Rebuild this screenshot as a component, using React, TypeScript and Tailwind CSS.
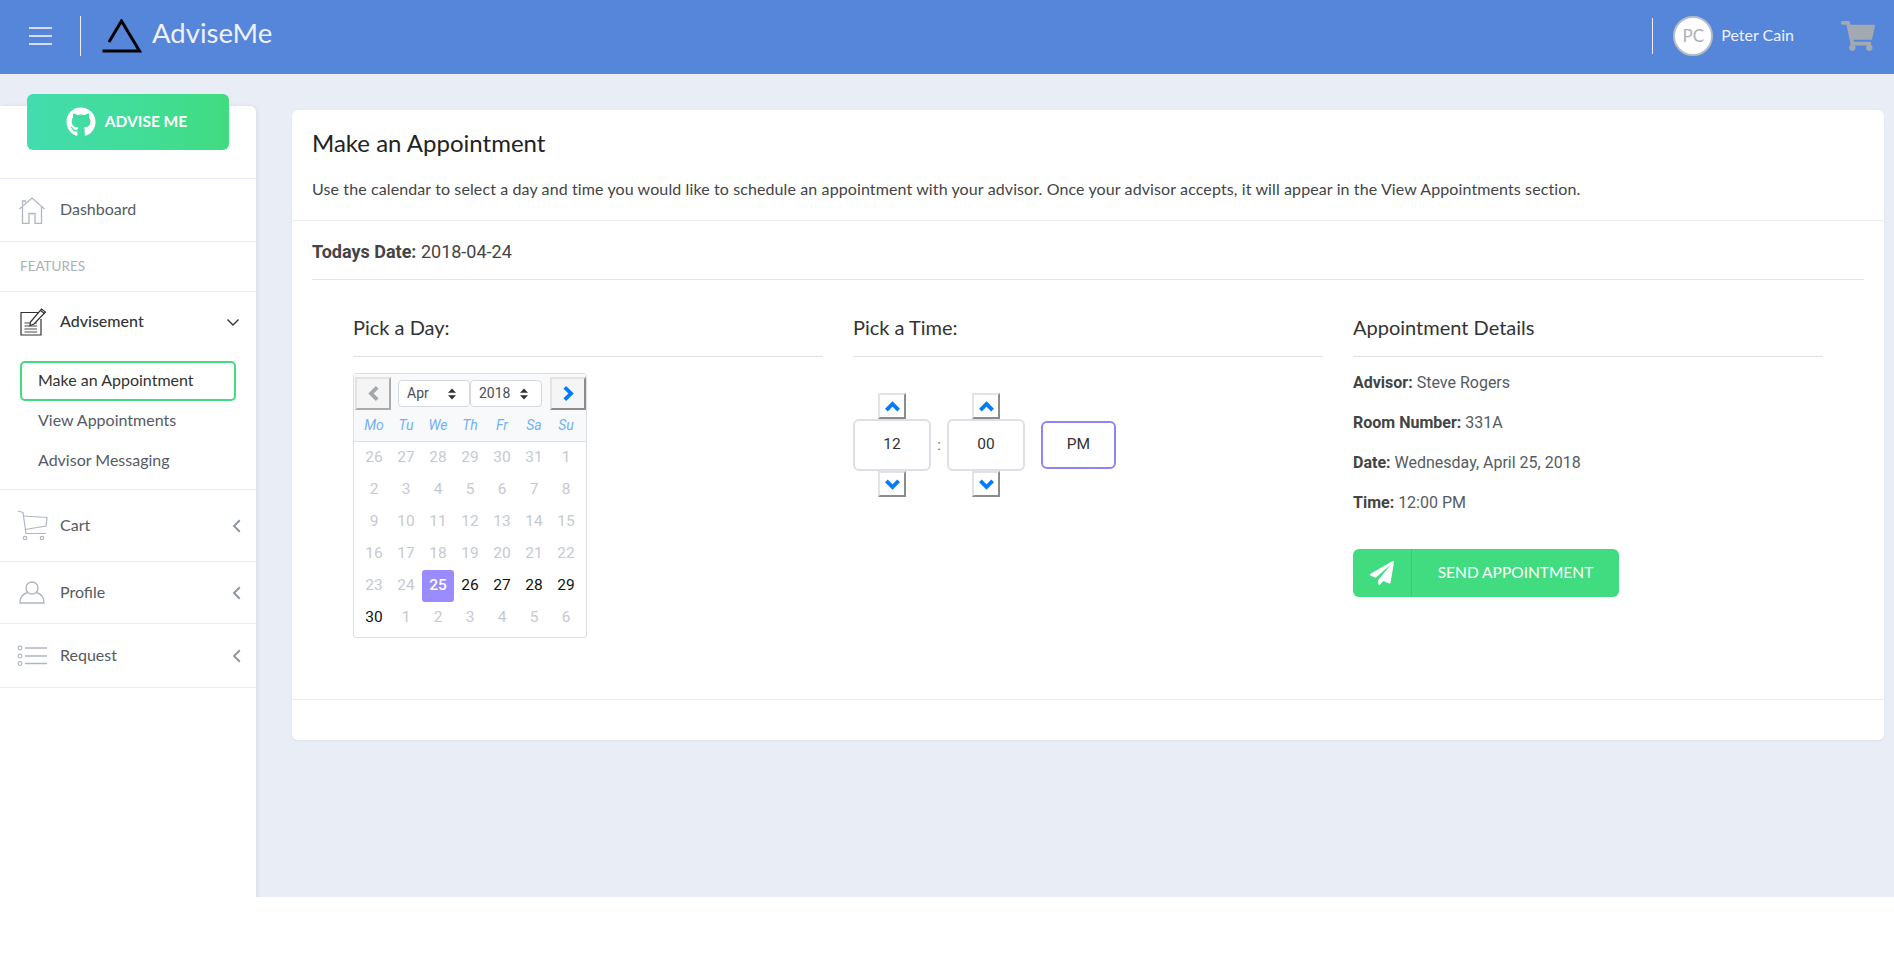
import React from "react";
import { FaGithub, FaShoppingCart, FaPaperPlane } from "react-icons/fa";

const exo = "font-['Lato','Noto_Sans',sans-serif]";
const roboto = "font-['Roboto',sans-serif]";

const HeavyChevron = ({ dir, color }: { dir: "left" | "right" | "up" | "down"; color: string }) => {
  const rot = { up: 0, right: 90, down: 180, left: 270 }[dir];
  return (
    <svg width="15" height="11" viewBox="0 0 15 11" fill="none" stroke={color} strokeWidth="3.8" style={{ transform: `rotate(${rot}deg)` }}>
      <path d="M1.4 9.2 L7.5 3 L13.6 9.2" />
    </svg>
  );
};

const Chevron = ({ dir }: { dir: "left" | "down" }) =>
  dir === "left" ? (
    <svg width="9" height="14" viewBox="0 0 9 14" fill="none" stroke="#8b949e" strokeWidth="1.9">
      <path d="M7.8 1.3 L2 7 L7.8 12.7" />
    </svg>
  ) : (
    <svg width="14" height="14" viewBox="0 0 14 14" fill="none" stroke="#333" strokeWidth="1.4">
      <path d="M1.5 4.5 L7 10 L12.5 4.5" />
    </svg>
  );

const HomeIcon = () => (
  <svg width="26" height="27" viewBox="0 0 26 27" fill="none" stroke="#b0b7c3" strokeWidth="1.3">
    <path d="M0.5 12 L13 1 L25.5 12" />
    <path d="M3.5 10 V26.3 H10 V16.5 H16 V26.3 H22.5 V10" />
    <path d="M3.5 8 V4 H6.5 V5.5" />
  </svg>
);
const NoteIcon = () => (
  <svg width="27" height="29" viewBox="0 0 27 29" fill="none" stroke="#333" strokeWidth="1.2">
    <path d="M18 5.5 H1 V28 H21 V12" />
    <path d="M4.5 16 H17 M4.5 19 H17 M4.5 22 H17 M4.5 25 H17" strokeWidth="0.9" />
    <path d="M10.5 15 L21.5 2 L25.5 5 L14 17 L10 18.5 Z" fill="#fff" />
    <path d="M20.5 3.5 L24.5 6.5" />
  </svg>
);
const CartIcon = () => (
  <svg width="31" height="31" viewBox="0 0 31 31" fill="none" stroke="#b0b7c3" strokeWidth="1.2">
    <path d="M1 1 L6 2.5 L9 23.5 H29" />
    <path d="M6.5 6 L30 7.5 L29 16 L8 19.5" />
    <circle cx="8" cy="28" r="1.7" />
    <circle cx="25" cy="28" r="1.7" />
  </svg>
);
const UserIcon = () => (
  <svg width="26" height="23" viewBox="0 0 26 23" fill="none" stroke="#b0b7c3" strokeWidth="1.4">
    <circle cx="13" cy="7" r="6" />
    <path d="M8.5 11.5 C3.5 13 1 17 1 22 H25 C25 17 22.5 13 17.5 11.5" />
  </svg>
);
const ListIcon = () => (
  <svg width="31" height="22" viewBox="0 0 31 22" fill="none" stroke="#b0b7c3">
    <circle cx="3" cy="3" r="1.9" strokeWidth="1.1" />
    <circle cx="3" cy="11" r="1.9" strokeWidth="1.1" />
    <circle cx="3" cy="18.5" r="1.9" strokeWidth="1.1" />
    <path d="M8 3 H30 M8 11 H30 M8 18.5 H30" strokeWidth="1.6" />
  </svg>
);

function NavRow({ icon, label, h }: { icon: React.ReactNode; label: string; h: string }) {
  return (
    <div className={`flex items-center border-b border-[#e9ecf2] ${h}`}>
      <div className="flex w-[60px] shrink-0 items-center justify-center pl-[4px]">{icon}</div>
      <span className="-mt-[2px] flex-1 text-[16px] text-[#555b62]">{label}</span>
      <span className="mr-[15px] flex"><Chevron dir="left" /></span>
    </div>
  );
}

const HEAD = ["Mo", "Tu", "We", "Th", "Fr", "Sa", "Su"];
const DAYS: [number, boolean][] = [
  [26, false], [27, false], [28, false], [29, false], [30, false], [31, false], [1, false],
  [2, false], [3, false], [4, false], [5, false], [6, false], [7, false], [8, false],
  [9, false], [10, false], [11, false], [12, false], [13, false], [14, false], [15, false],
  [16, false], [17, false], [18, false], [19, false], [20, false], [21, false], [22, false],
  [23, false], [24, false], [25, true], [26, true], [27, true], [28, true], [29, true],
  [30, true], [1, false], [2, false], [3, false], [4, false], [5, false], [6, false],
];

const UpDown = () => (
  <svg width="8" height="12" viewBox="0 0 8 12" fill="#333">
    <path d="M4 0.5 L8 4.8 H0 Z M4 11.5 L8 7.2 H0 Z" />
  </svg>
);

function Select({ label, w }: { label: string; w: string }) {
  return (
    <div className={`flex h-[27px] items-center justify-between rounded-[4px] border border-[#d5d9df] bg-white pl-[8px] pr-[13px] text-[14px] text-[#495057] ${w}`}>
      <span>{label}</span>
      <UpDown />
    </div>
  );
}

function Calendar() {
  return (
    <div className={`w-[234px] rounded-[3px] border border-[#dcdfe4] bg-white pb-[3px] ${roboto}`}>
      <div className="border-b border-[#dcdfe4] bg-[#f8f9fa]">
        <div className="flex items-center pl-[1px] pt-[3px]">
          <button className="flex h-[33px] w-[36px] items-center justify-center border-2 border-t-[#e3e3e3] border-l-[#e3e3e3] border-r-[#ababab] border-b-[#ababab] bg-[#f5f5f5]">
            <HeavyChevron dir="left" color="#a3a8ad" />
          </button>
          <div className="ml-[7px] flex">
            <Select label="Apr" w="w-[72px]" />
            <Select label="2018" w="w-[72px]" />
          </div>
          <button className="ml-auto flex h-[33px] w-[36px] items-center justify-center border-2 border-t-[#e3e3e3] border-l-[#e3e3e3] border-r-[#8c8c8c] border-b-[#8c8c8c] bg-[#f5f5f5]">
            <HeavyChevron dir="right" color="#007bff" />
          </button>
        </div>
        <div className="grid grid-cols-[repeat(7,32px)] justify-center">
          {HEAD.map((d) => (
            <div key={d} className="flex h-[31px] items-center justify-center text-[14px] italic text-[#6fb1fc]">{d}</div>
          ))}
        </div>
      </div>
      <div className="grid grid-cols-[repeat(7,32px)] justify-center">
        {DAYS.map(([d, active], i) => (
          <div
            key={i}
            className={`flex h-[32px] items-center justify-center text-[15.5px] ${
              i === 30
                ? "rounded-[3px] bg-[#9a8cff] font-medium text-white"
                : active
                ? "text-[#111]"
                : "text-[#c6cacf]"
            }`}
          >
            {d}
          </div>
        ))}
      </div>
    </div>
  );
}

function Spin({ up }: { up?: boolean }) {
  return (
    <button className="flex h-[26px] w-[28px] items-center justify-center border-2 border-t-[#e3e3e3] border-l-[#e3e3e3] border-r-[#8c8c8c] border-b-[#8c8c8c] bg-white">
      <HeavyChevron dir={up ? "up" : "down"} color="#007bff" />
    </button>
  );
}

function TimeField({ value }: { value: string }) {
  return (
    <div className="flex w-[78px] flex-col items-center">
      <Spin up />
      <div className="flex h-[52px] w-[78px] items-center justify-center rounded-[6px] border-2 border-[#dde1e7] bg-white text-[15.5px] text-[#333]">
        {value}
      </div>
      <Spin />
    </div>
  );
}

const Detail = ({ k, v }: { k: string; v: string }) => (
  <div className="flex h-[40px] items-center text-[16px] text-[#555b62]">
    <span><b className="font-bold text-[#444]">{k}</b> {v}</span>
  </div>
);

const ColHead = ({ children }: { children: React.ReactNode }) => (
  <div className="flex h-[49px] items-center border-b border-[#dee2e6] pb-[11px] text-[20px] text-[#333]">{children}</div>
);

export default function App() {
  return (
    <div className={`flex min-h-[965px] flex-col bg-[#e9edf5] ${exo}`}>
      <header className="flex h-[74px] items-center bg-[#5686da] pb-[2px] text-[#eef1fb]">
        <div className="ml-[29px] flex w-[23px] flex-col gap-[6.5px]">
          <span className="h-[1.5px] bg-[#d5dcf2]" />
          <span className="h-[1.5px] bg-[#d5dcf2]" />
          <span className="h-[1.5px] bg-[#d5dcf2]" />
        </div>
        <span className="ml-[28px] h-[40px] w-px bg-[#eef1fb]" />
        <svg className="ml-[21px]" width="40" height="34" viewBox="0 0 40 34" fill="none" stroke="#000" strokeWidth="3">
          <path d="M0.5 32 H37.5 L19.5 2 L7 23" />
        </svg>
        <span className="-mt-[6px] ml-[10px] text-[27.5px] leading-none">AdviseMe</span>
        <span className="ml-auto h-[36px] w-px bg-[#eef1fb]" />
        <div className="ml-[20px] flex h-[40px] w-[40px] items-center justify-center rounded-full border-2 border-[#b9bdc4] bg-white text-[17px] text-[#a9afb8]">PC</div>
        <span className="-mt-[3px] ml-[8px] text-[16px]">Peter Cain</span>
        <FaShoppingCart className="ml-[47px] mr-[19px] text-[#a3a9b3]" size={34} />
      </header>
      <div className="flex flex-1">
        <aside className="mt-[32px] w-[256px] shrink-0 rounded-tr-[6px] bg-white shadow-[1px_0_4px_rgba(0,0,0,0.08)]">
          <div className="flex h-[73px] items-start justify-start border-b border-[#e9ecf2] pl-[27px]">
            <div className="-mt-[12px] flex h-[56px] w-[202px] items-center justify-center gap-[9px] rounded-[6px] bg-gradient-to-r from-[#43dcb0] to-[#41dc80] pr-[3px] text-white">
              <FaGithub size={30} />
              <span className="text-[15.5px] font-bold">ADVISE ME</span>
            </div>
          </div>
          <div className="flex h-[63px] items-center border-b border-[#e9ecf2]">
            <div className="flex w-[60px] shrink-0 items-center justify-center pl-[4px]"><HomeIcon /></div>
            <span className="-mt-[2px] text-[16px] text-[#555b62]">Dashboard</span>
          </div>
          <div className="flex h-[50px] items-center border-b border-[#e9ecf2] pl-[20px] text-[13.5px] text-[#a9b0bb]">FEATURES</div>
          <div className="h-[198px] border-b border-[#e9ecf2]">
            <div className="flex h-[59px] items-center">
              <div className="flex w-[60px] shrink-0 items-center justify-center pl-[6px]"><NoteIcon /></div>
              <span className="-mt-[2px] flex-1 text-[16px] font-medium text-[#333]">Advisement</span>
              <span className="mr-[16px] flex"><Chevron dir="down" /></span>
            </div>
            <div className="ml-[20px] mt-[10px] flex h-[40px] w-[216px] items-center rounded-[5px] border-2 border-[#41dc80] pb-[3px] pl-[16px] text-[16px] text-[#333]">Make an Appointment</div>
            <div className="-mt-[1px] flex h-[40px] items-center pl-[38px] text-[16px] text-[#555b62]">View Appointments</div>
            <div className="flex h-[40px] items-center pl-[38px] text-[16px] text-[#555b62]">Advisor Messaging</div>
          </div>
          <NavRow icon={<CartIcon />} label="Cart" h="h-[72px]" />
          <NavRow icon={<UserIcon />} label="Profile" h="h-[62px]" />
          <NavRow icon={<ListIcon />} label="Request" h="h-[64px]" />
        </aside>
        <main className="flex min-w-0 flex-1 flex-col">
          <div className="ml-[36px] mr-[10px] mt-[36px] h-[630px] rounded-[6px] bg-white shadow-[0_1px_3px_rgba(0,0,0,0.05)]">
            <div className="h-[111px] border-b border-[#e9ecf2] px-[20px] pt-[18px]">
              <h1 className="text-[24px] leading-[30px] text-[#222]">Make an Appointment</h1>
              <p className="mt-[21px] text-[16px] leading-[20px] tracking-[0.11px] text-[#444]">
                Use the calendar to select a day and time you would like to schedule an appointment with your advisor. Once your advisor accepts, it will appear in the View Appointments section.
              </p>
            </div>
            <div className="h-[479px] border-b border-[#e9ecf2] px-[20px]">
              <div className={`flex h-[59px] items-center border-b border-[#e4e7ec] pt-[2px] text-[18px] text-[#444] ${roboto}`}>
                <span><b className="font-bold">Todays Date:</b> 2018-04-24</span>
              </div>
              <div className="flex gap-[30px] px-[41px] pt-[28px]">
                <div className="w-[470px]">
                  <ColHead>Pick a Day:</ColHead>
                  <div className="mt-[16px]"><Calendar /></div>
                </div>
                <div className="w-[470px]">
                  <ColHead>Pick a Time:</ColHead>
                  <div className={`mt-[36px] flex items-center ${roboto}`}>
                    <TimeField value="12" />
                    <span className="w-[16px] text-center text-[15px] text-[#666]">:</span>
                    <TimeField value="00" />
                    <div className="ml-[16px] flex h-[48px] w-[75px] items-center justify-center rounded-[6px] border-2 border-[#8f84f5] bg-white text-[15.5px] text-[#333]">PM</div>
                  </div>
                </div>
                <div className="w-[470px]">
                  <ColHead>Appointment Details</ColHead>
                  <div className={`mt-[6px] ${roboto}`}>
                    <Detail k="Advisor:" v="Steve Rogers" />
                    <Detail k="Room Number:" v="331A" />
                    <Detail k="Date:" v="Wednesday, April 25, 2018" />
                    <Detail k="Time:" v="12:00 PM" />
                  </div>
                  <button className="mt-[26px] flex h-[48px] w-[266px] items-center rounded-[6px] bg-[#41dc80] text-white">
                    <span className="flex h-full w-[59px] items-center justify-center border-r border-[#3cc775]"><FaPaperPlane size={24} /></span>
                    <span className="flex-1 text-center text-[15.5px]">SEND APPOINTMENT</span>
                  </button>
                </div>
              </div>
            </div>
          </div>
          <footer className="mt-auto h-[68px] bg-white" />
        </main>
      </div>
    </div>
  );
}
